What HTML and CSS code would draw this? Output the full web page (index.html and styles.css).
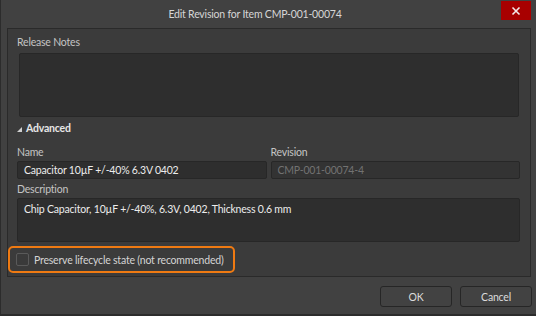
FILE: index.html
```html
<!DOCTYPE html>
<html lang="en">
  <head>
    <meta charset="UTF-8" />
    <meta name="viewport" content="width=device-width, initial-scale=1.0" />
    <title>Edit Revision</title>
    <link rel="stylesheet" href="styles.css">
  </head>
  <body>
    <div class="window">
      <div class="titlebar">
        <div class="title">Edit Revision for Item CMP-001-00074</div>
        <div class="close">
          <svg width="10" height="10" viewBox="0 0 10 10">
            <path d="M1.5 1.5 L8.5 8.5 M8.5 1.5 L1.5 8.5" stroke="#f4e8e8" stroke-width="1.6" />
          </svg>
        </div>
      </div>

      <div class="panel">
        <div class="label">Release Notes</div>
        <div class="notes"></div>

        <div class="section">
          <svg width="5" height="5" viewBox="0 0 5 5">
            <polygon points="5,0 5,5 0,5" fill="#d0d0d0" />
          </svg>
          <span>Advanced</span>
        </div>

        <div class="fields">
          <div>
            <div class="label">Name</div>
            <div class="input">Capacitor 10µF +/-40% 6.3V 0402</div>
          </div>
          <div>
            <div class="label">Revision</div>
            <div class="input disabled">CMP-001-00074-4</div>
          </div>
        </div>

        <div class="label">Description</div>
        <div class="input desc">Chip Capacitor, 10µF +/-40%, 6.3V, 0402, Thickness 0.6 mm</div>

        <div class="highlight">
          <span class="checkbox"></span>
          <span>Preserve lifecycle state (not recommended)</span>
        </div>
      </div>

      <div class="footer">
        <button class="btn">OK</button>
        <button class="btn">Cancel</button>
      </div>
    </div>
  </body>
</html>
```

FILE: styles.css
```css
body {
  margin: 0;
  padding: 0;
  background: #404040;
  font-family: Lato, "Noto Sans", sans-serif;
  font-size: 10.5px;
  letter-spacing: -0.2px;
}

.window {
  width: 536px;
  height: 316px;
  box-sizing: border-box;
  background: #414141;
  border-left: 1px solid #2c2c2c;
  border-bottom: 2px solid #2c2c2c;
  display: flex;
  flex-direction: column;
}

.titlebar {
  height: 28px;
  display: flex;
  align-items: flex-start;
}

.title {
  flex: 1;
  padding-left: 8px;
  text-align: center;
  line-height: 29px;
  font-size: 10.5px;
  color: #d6d6d6;
}

.close {
  width: 30px;
  height: 19px;
  margin: 1px 5px 0 0;
  background: #a80000;
  display: flex;
  align-items: center;
  justify-content: center;
}

.panel {
  margin: 0 5px 0 6px;
  height: 249px;
  box-sizing: border-box;
  padding: 5px 10px 0 9px;
  background: #3b3b3b;
  border: 1px solid #2a2a2a;
}

.label {
  height: 16px;
  line-height: 16px;
  color: #c4c4c4;
}

.notes {
  height: 64px;
  margin: 3px 1px 0 2px;
  box-sizing: border-box;
  background: #2e2e2e;
  border: 1px solid #272727;
  border-radius: 2px;
}

.section {
  height: 16px;
  margin-top: 3px;
  display: flex;
  align-items: center;
  gap: 4px;
  color: #e6e6e6;
  font-weight: bold;
}

.section svg {
  margin-top: 2px;
}

.fields {
  display: grid;
  grid-template-columns: 1fr 1fr;
  gap: 4px;
  margin-top: 8px;
  margin-bottom: 2px;
}

.input {
  height: 18px;
  margin-top: 1px;
  box-sizing: border-box;
  padding: 0 6px;
  line-height: 16px;
  background: #2e2e2e;
  border: 1px solid #272727;
  border-radius: 2px;
  color: #ececec;
  white-space: nowrap;
}

.input.disabled {
  color: #727272;
  background: #333;
}

.input.desc {
  height: 44px;
  padding-top: 2px;
}

.highlight {
  margin: 4px 0 0 -9px;
  height: 27px;
  width: 227px;
  box-sizing: border-box;
  border: 2px solid #ef7a12;
  border-radius: 5px;
  display: flex;
  align-items: center;
  gap: 5px;
  padding-left: 6px;
  color: #d4d4d4;
  white-space: nowrap;
}

.checkbox {
  flex: none;
  width: 13px;
  height: 13px;
  box-sizing: border-box;
  background: #3a3a3a;
  border: 1px solid #5a5a5a;
  border-radius: 2px;
}

.footer {
  display: flex;
  justify-content: flex-end;
  gap: 8px;
  padding: 9px 4px 0 0;
}

.btn {
  width: 72px;
  height: 21px;
  font-family: inherit;
  font-size: 10.5px;
  letter-spacing: -0.2px;
  color: #dcdcdc;
  background: #424242;
  border: 1px solid #262626;
  border-radius: 3px;
  padding: 0;
}
```
